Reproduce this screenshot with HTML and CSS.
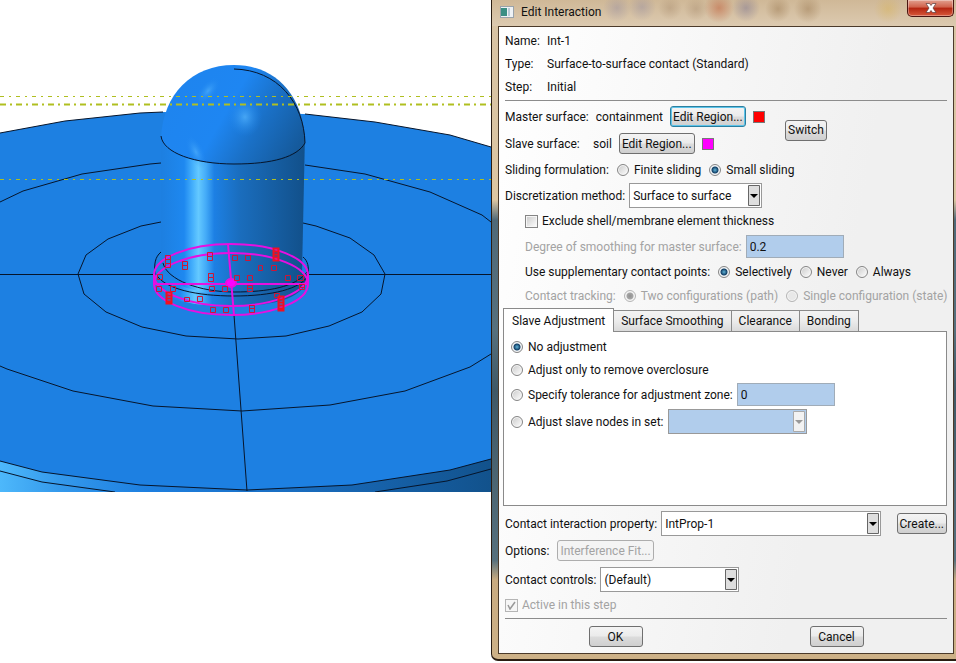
FILE: index.html
```html
<!DOCTYPE html>
<html lang="en">
<head>
    <meta charset="utf-8">
    <title>Edit Interaction</title>
    <link rel="stylesheet" href="styles.css">
</head>
<body>
    <main class="workspace">
        <svg class="viewport" viewBox="0 0 491 492" role="img" aria-label="Containment model">
            <defs>
                <linearGradient id="side" x1="0" x2="1">
                    <stop offset="0" stop-color="#4db8fb"/>
                    <stop offset=".12" stop-color="#3499ec"/>
                    <stop offset=".3" stop-color="#1d7fe0"/>
                    <stop offset=".6" stop-color="#196dc0"/>
                    <stop offset="1" stop-color="#12528c"/>
                </linearGradient>
                <linearGradient id="shaft" x1="0" x2="1">
                    <stop offset="0" stop-color="#1d7fe0"/>
                    <stop offset=".16" stop-color="#1e88f0"/>
                    <stop offset=".22" stop-color="#45b0fc"/>
                    <stop offset=".26" stop-color="#64c9ff"/>
                    <stop offset=".31" stop-color="#45acf8"/>
                    <stop offset=".37" stop-color="#1d80e4"/>
                    <stop offset=".55" stop-color="#1a6dbd"/>
                    <stop offset="1" stop-color="#12508a"/>
                </linearGradient>
                <linearGradient id="dome" x1="0" y1=".3" x2="1" y2=".7">
                    <stop offset="0" stop-color="#1e84ee"/>
                    <stop offset=".45" stop-color="#1e86f2"/>
                    <stop offset=".7" stop-color="#1a70c6"/>
                    <stop offset="1" stop-color="#155a9c"/>
                </linearGradient>
                <radialGradient id="shine">
                    <stop offset="0" stop-color="#58b8ff"/>
                    <stop offset="1" stop-color="#2088f0" stop-opacity="0"/>
                </radialGradient>
            </defs>

            <!-- soil block -->
            <path fill="url(#side)" d="M0 440H491V492H0z"/>
            <path fill="#1d80e2" d="M0 133L65 121L140 113L163 112L305 114L375 122L450 135L491 147V459L450 470L352 485L247 490L140 485L42 472L0 461z"/>
            <g class="edge">
                <path d="M0 133L65 121L140 113L163 112M305 114L375 122L450 135L491 147"/>
                <path d="M0 461L42 472L140 485L247 490L352 485L450 470L491 459"/>
                <path d="M0 471L42 482L115 492M375 492L447 481L491 469"/>
                <path d="M0 202L23 191L82 174L150 164L161 163M305 165L365 174L430 192L482 215L491 222"/>
                <path d="M0 366L7 369L73 391L153 406L242 411L330 405L405 391L470 367L491 354"/>
                <path d="M161 222L141 226L108 239L86 255L78 274L84 294L106 312L142 327L186 336L238 339L286 336L329 326L362 312L381 294L385 274L374 255L350 238L316 226L303 223"/>
                <path d="M0 274.500H157M308 274.500H491M234 315L247 491"/>
            </g>

            <!-- containment -->
            <path fill="url(#shaft)" d="M155 274C158 303 195 306 233 306S306 300 309 274z"/>
            <path fill="url(#shaft)" d="M161 135H305L302 274C294 288 265 295 233 295S166 286 161 265z"/>
            <path fill="url(#dome)" d="M161 138C163 94 192 65 234 65S304 96 305 143C295 157 265 164 234 164S168 158 161 138z"/>
            <ellipse cx="208" cy="91" rx="8" ry="16" fill="url(#shine)" opacity=".6" transform="rotate(40 208 91)"/>
            <ellipse cx="245" cy="117" rx="17" ry="20" fill="url(#shine)" opacity=".7"/>
            <ellipse cx="196" cy="152" rx="8" ry="18" fill="url(#shine)" opacity=".6" transform="rotate(-25 196 152)"/>
            <g class="edge">
                <path d="M161 136C163 153 195 164 234 164S297 157 305 143"/>
                <path d="M234 69C278 70 304 103 305 143"/>
                <path d="M163 263C167 280 200 292 234 292S296 287 307 272"/>
                <path d="M156 274C164 289 197 296 234 296S302 289 308 275"/>
                <path d="M161 252C155 257 154 264 155 274M303 257C308 261 309 267 308 275"/>
            </g>

            <!-- datum axes -->
            <path class="datum" d="M0 96.500H491M0 179.500H491"/>
            <path class="datum datum-bold" d="M0 104.500H491"/>

            <!-- highlighted surface -->
            <g class="surface">
                <ellipse cx="231" cy="275" rx="77" ry="31"/>
                <ellipse cx="231" cy="284" rx="77" ry="31"/>
                <path d="M154 284H308M228 244L234 315M154 274V284M308 274V284"/>
                <ellipse cx="231" cy="283" rx="5" ry="4" fill="#f0f"/>
            </g>
            <path class="marks" d="M165.500 255.500h5v4h-5zv8h5v-4M165.500 263.500v4h5v-4M182.500 261.500h5v4h-5zv8h5v-4M207.500 252.500h5v4h-5zv8h5v-4M232.500 255.500h5v5h-5zM245.500 255.500h5v5h-5zM258.500 265.500h4v5h-4zM271.500 265.500h5v5h-5zM157.500 274.500h5v5h-5zM156.500 286.500h5v5h-5zM170.500 286.500h5v5h-5zM208.500 273.500h5v4h-5zv8h5v-4M234.500 275.500h5v5h-5zM247.500 275.500h5v5h-5zM285.500 275.500h5v5h-5zM297.500 275.500h6v5h-6zM209.500 286.500h5v5h-5zM222.500 286.500h5v5h-5zM247.500 285.500h5v6h-5zv3h5M299.500 284.500h5v5h-5zv3h5M184.500 297.500h5v4h-5zM197.500 296.500h5v5h-5zM274.500 293.500h5v4h-5zM210.500 307.500h5v5h-5zM223.500 307.500h5v5h-5zM249.500 305.500h5v7h-5zv3h5"/>
            <path class="marks marks-dense" d="M273.500 248.500h5v12h-5zM273.500 251.500h5M273.500 254.500h5M273.500 257.500h5M166.500 292.500h5v11h-5zM166.500 295.500h5M166.500 298.500h5M166.500 301.500h5M278.500 296.500h5v14h-5zM278.500 299.500h5M278.500 302.500h5M278.500 305.500h5M278.500 308.500h5"/>
        </svg>

        <section class="dialog" aria-labelledby="dialog-title">
            <header class="titlebar">
                <svg class="app-icon" width="14" height="12" viewBox="0 0 14 12" aria-hidden="true">
                    <rect x=".5" y=".5" width="13" height="11" fill="#eef2f5" stroke="#9aa3aa"/>
                    <rect x="1" y="2" width="6" height="8" fill="#3a8f84"/>
                    <rect x="8" y="2" width="2" height="8" fill="#b9cbd8"/>
                </svg>
                <h1 id="dialog-title">Edit Interaction</h1>
                <button class="close" aria-label="Close">
                    <svg width="12" height="10" viewBox="0 0 12 10" aria-hidden="true">
                        <path d="M1 .5H4.500L6 2.500L7.500 .5H11L8 5L11 9.500H7.500L6 7.500L4.500 9.500H1L4 5z" fill="#fff" stroke="#5b3b3b" stroke-width=".7"/>
                    </svg>
                </button>
            </header>

            <form class="content" onsubmit="return false">
                <dl class="summary">
                    <dt>Name:</dt><dd>Int-1</dd>
                    <dt>Type:</dt><dd>Surface-to-surface contact (Standard)</dd>
                    <dt>Step:</dt><dd>Initial</dd>
                </dl>
                <hr>

                <div class="surfaces">
                    <div class="surface-list">
                        <div class="row">
                            <span class="surface-label">Master surface:</span>
                            <span>containment</span>
                            <button class="btn focused">Edit Region...</button>
                            <span class="swatch red"></span>
                        </div>
                        <div class="row">
                            <span class="surface-label">Slave surface:</span>
                            <span>soil</span>
                            <button class="btn">Edit Region...</button>
                            <span class="swatch magenta"></span>
                        </div>
                    </div>
                    <button class="btn">Switch</button>
                </div>

                <div class="row">
                    <span>Sliding formulation:</span>
                    <label><input type="radio" name="sliding">Finite sliding</label>
                    <label><input type="radio" name="sliding" checked>Small sliding</label>
                </div>
                <div class="row tall tight">
                    <label for="method">Discretization method:</label>
                    <select id="method" class="method"><option>Surface to surface</option></select>
                </div>
                <div class="row indent">
                    <label><input type="checkbox">Exclude shell/membrane element thickness</label>
                </div>
                <div class="row tall indent tight">
                    <label for="smoothing" class="off">Degree of smoothing for master surface:</label>
                    <input type="text" id="smoothing" value="0.2" readonly>
                </div>
                <div class="row indent">
                    <span>Use supplementary contact points:</span>
                    <label><input type="radio" name="points" checked>Selectively</label>
                    <label><input type="radio" name="points">Never</label>
                    <label><input type="radio" name="points">Always</label>
                </div>
                <div class="row short indent off">
                    <span>Contact tracking:</span>
                    <label><input type="radio" name="tracking" checked disabled>Two configurations (path)</label>
                    <label><input type="radio" name="tracking" disabled>Single configuration (state)</label>
                </div>

                <div class="tabs" role="tablist">
                    <button class="tab active" role="tab" aria-selected="true">Slave Adjustment</button>
                    <button class="tab" role="tab">Surface Smoothing</button>
                    <button class="tab" role="tab">Clearance</button>
                    <button class="tab" role="tab">Bonding</button>
                </div>
                <div class="panel" role="tabpanel">
                    <div class="row short">
                        <label><input type="radio" name="adjust" checked>No adjustment</label>
                    </div>
                    <div class="row short">
                        <label><input type="radio" name="adjust">Adjust only to remove overclosure</label>
                    </div>
                    <div class="row tall tight">
                        <label><input type="radio" name="adjust">Specify tolerance for adjustment zone:</label>
                        <input type="text" value="0" aria-label="Tolerance" readonly>
                    </div>
                    <div class="row tall tight">
                        <label><input type="radio" name="adjust">Adjust slave nodes in set:</label>
                        <select class="node-set" aria-label="Node set" disabled><option></option></select>
                    </div>
                </div>

                <div class="row tall tight property">
                    <label for="property">Contact interaction property:</label>
                    <select id="property" class="grow"><option>IntProp-1</option></select>
                    <button class="btn create">Create...</button>
                </div>
                <div class="row tall">
                    <span>Options:</span>
                    <button class="btn" disabled>Interference Fit...</button>
                </div>
                <div class="row tall tight controls">
                    <label for="controls">Contact controls:</label>
                    <select id="controls" class="default-set"><option>(Default)</option></select>
                </div>
                <div class="row off">
                    <label><input type="checkbox" checked disabled>Active in this step</label>
                </div>
                <hr>

                <footer class="actions">
                    <button class="btn wide">OK</button>
                    <button class="btn wide">Cancel</button>
                </footer>
            </form>
        </section>
    </main>
</body>
</html>
```
FILE: styles.css
```css
* {
    box-sizing: border-box;
}

body {
    margin: 0;
    background: #fff;
    color: #111;
    font-family: Roboto, "Open Sans", sans-serif;
    font-size: 12px;
    line-height: 16px;
}

button,
input,
select {
    margin: 0;
    font: inherit;
    color: inherit;
}

.workspace {
    display: grid;
    grid-template-columns: minmax(0, 491fr) minmax(0, 465fr);
    align-items: start;
}

/* model view */
.viewport {
    display: block;
    width: 100%;
}

.edge {
    fill: none;
    stroke: #06152b;
    stroke-width: 1;
}

.datum {
    stroke: #b0bf20;
    stroke-width: 1;
    stroke-dasharray: 4 5 2 5;
}

.datum-bold {
    stroke-dasharray: 6 4 2 4;
    stroke-width: 2;
}

.surface {
    fill: none;
    stroke: #e80fe0;
    stroke-width: 2;
}

.marks {
    fill: none;
    stroke: #d01535;
    stroke-width: 1;
}

.marks-dense {
    stroke: #f01020;
    stroke-width: 2;
}

/* dialog window */
.dialog {
    padding: 0 2px 5px 6px;
    border: 1px solid #2a1d12;
    border-width: 0 0 2px 1px;
    border-radius: 0 0 0 7px;
    background: linear-gradient(#d8c3a4 0, #dcc6a2 200px, #4f6978 220px, #56707d 330px, #3f5866 390px, #56707d 560px, #c9ab80 580px, #cdb187);
}

.titlebar {
    display: flex;
    align-items: flex-start;
    height: 26px;
    margin: 0 -2px 0 -6px;
    padding: 4px 2px 0 8px;
    background:
        radial-gradient(circle at 125px 8px, #8d86a066 0, transparent 14px),
        radial-gradient(circle at 150px 7px, #8d86a066 0, transparent 14px),
        radial-gradient(circle at 178px 8px, #a5886a66 0, transparent 12px),
        radial-gradient(circle at 204px 9px, #a5886a66 0, transparent 12px),
        radial-gradient(circle at 227px 8px, #c0603c88 0, transparent 15px),
        radial-gradient(circle at 254px 8px, #77709077 0, transparent 14px),
        radial-gradient(circle at 286px 9px, #99774f77 0, transparent 13px),
        radial-gradient(circle at 316px 9px, #99774f77 0, transparent 14px),
        radial-gradient(circle at 396px 9px, #d9b24e66 0, transparent 14px),
        linear-gradient(#cfb897, #dccab0);
}

.app-icon {
    margin: 2px 7px 0 0;
}

.titlebar h1 {
    flex: 1;
    margin: 0;
    font-size: 12px;
    font-weight: normal;
}

.close {
    display: flex;
    align-items: center;
    justify-content: center;
    width: 47px;
    height: 17px;
    margin-top: -4px;
    padding: 0;
    border: 1px solid #4a1510;
    border-top: 0;
    border-radius: 0 0 5px 5px;
    background: linear-gradient(#e2a08e, #d0604a 45%, #b32410 50%, #d8583a);
    box-shadow: inset 0 0 0 1px #ffffff55;
}

.content {
    padding: 3px 6px 0 6px;
    border: 1px solid #4b3a2a;
    background: linear-gradient(100deg, #fff, #f0f0f0 70%);
}

.summary {
    display: grid;
    grid-template-columns: 42px 1fr;
    margin: 0;
    line-height: 23px;
}

.summary dd {
    margin: 0;
}

hr {
    height: 1px;
    margin: 1px 0;
    border: 0;
    background: #8c8c8c;
}

.row {
    display: flex;
    align-items: center;
    gap: 8px;
    min-height: 24px;
    white-space: nowrap;
}

.short {
    min-height: 23px;
}

.tall {
    min-height: 27px;
}

.tight {
    gap: 4px;
}

.indent {
    margin-left: 20px;
}

.off,
.btn:disabled {
    color: #a3a3a3;
}

label {
    display: flex;
    align-items: center;
}

.surfaces {
    display: flex;
    align-items: center;
    padding: 1px 0;
}

.surface-list {
    width: 280px;
}

.surface-list .row {
    gap: 7px;
    min-height: 27px;
}

.surface-label {
    min-width: 81px;
}

.swatch {
    width: 12px;
    height: 12px;
    border: 1px solid #777;
}

.red {
    background: #f00;
}

.magenta {
    background: #f0f;
}

.btn {
    height: 21px;
    padding: 0 2px;
    border: 1px solid #6f6f6f;
    border-radius: 3px;
    background: linear-gradient(#f4f4f4, #ebebeb 48%, #dcdcdc 52%, #cfcfcf);
    line-height: 18px;
}

.btn:disabled {
    border-color: #adadad;
    background: #f4f4f4;
}

.focused {
    border-color: #2c7f9f;
    box-shadow: inset 0 0 0 1px #5cc4ea;
}

input[type="radio"],
input[type="checkbox"] {
    appearance: none;
    flex: none;
    width: 12px;
    height: 12px;
    margin-right: 5px;
    border: 1px solid #858585;
    background: linear-gradient(135deg, #c9c9c9, #fff);
    box-shadow: inset 0 0 0 1px #f6f6f6;
}

input[type="radio"] {
    border-radius: 50%;
}

input[type="radio"]:checked {
    background: radial-gradient(circle, #5fb4d8 0, #123f66 3px, #e8eef2 4px);
}

input[type="radio"]:disabled {
    border-color: #b5b5b5;
    background: #e8e8e8;
}

input[type="radio"]:checked:disabled {
    background: radial-gradient(circle, #909090 0, #a5a5a5 3px, #f0f0f0 4px);
}

input[type="checkbox"] {
    width: 13px;
    height: 13px;
    margin-right: 4px;
}

input[type="checkbox"]:checked {
    border-color: #b5b5b5;
    background: #f6f6f6 url("data:image/svg+xml,%3Csvg xmlns='http://www.w3.org/2000/svg' viewBox='0 0 11 11'%3E%3Cpath d='M2 5l2 4 5-7' fill='none' stroke='%23999' stroke-width='1.500'/%3E%3C/svg%3E");
}

input[type="text"] {
    width: 98px;
    height: 23px;
    padding: 0 3px;
    border: 1px solid #a0acb8;
    background: #b1cdec;
}

select {
    appearance: none;
    height: 25px;
    padding: 0 16px 0 3px;
    border: 1px solid #999;
    border-radius: 0;
    background: #fff url("data:image/svg+xml,%3Csvg xmlns='http://www.w3.org/2000/svg' width='12' height='21'%3E%3Cpath d='M.5 .5h11v20H.5z' fill='%23dedede' stroke='%23666'/%3E%3Cpath d='M2 9h8L6 13z'/%3E%3C/svg%3E") no-repeat right 1px center;
}

select:disabled {
    background: #b1cdec url("data:image/svg+xml,%3Csvg xmlns='http://www.w3.org/2000/svg' width='12' height='21'%3E%3Cpath d='M.5 .5h11v20H.5z' fill='%23f2f2f2' stroke='%23aaa'/%3E%3Cpath d='M2 9h8L6 13z' fill='%23999'/%3E%3C/svg%3E") no-repeat right 1px center;
    opacity: 1;
}

.method {
    width: 133px;
}

.node-set,
.default-set {
    width: 139px;
}

.tabs {
    display: flex;
    align-items: flex-end;
    margin: 1px 0 0 -2px;
}

.tab {
    height: 21px;
    padding: 0 7px;
    border: 1px solid #8a8a8a;
    border-bottom: 0;
    border-left: 0;
    background: linear-gradient(#f3f3f3, #ececec 50%, #dadada);
    white-space: nowrap;
}

.tab.active {
    z-index: 1;
    height: 24px;
    margin-bottom: -1px;
    padding: 0 8px;
    border-left: 1px solid #8a8a8a;
    background: #fff;
}

.panel {
    min-height: 175px;
    margin-left: -2px;
    padding: 3px 7px;
    border: 1px solid #8a8a8a;
    background: #fff;
}

.property {
    margin-top: 4px;
}

.grow {
    flex: 1;
    min-width: 0;
}

.create {
    margin-left: 12px;
}

.controls {
    margin-top: 2px;
}

.actions {
    display: flex;
    justify-content: space-around;
    align-items: center;
    height: 33px;
}

.wide {
    width: 54px;
}
```
